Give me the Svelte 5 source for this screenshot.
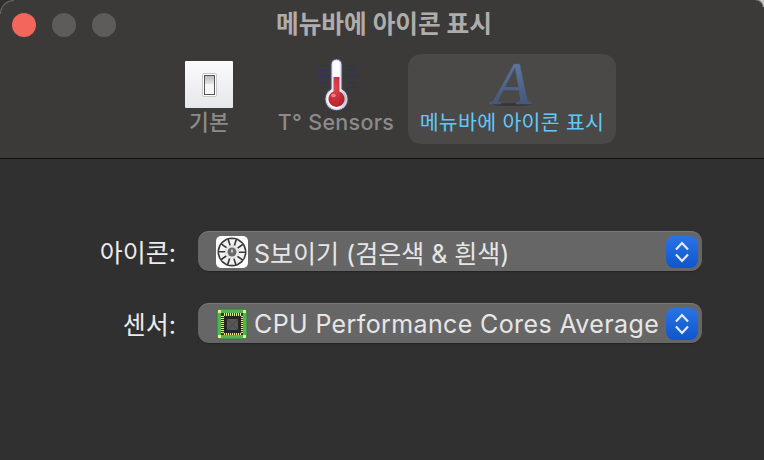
<script>
  const tabs = [
    { id: 'basic', label: '기본' },
    { id: 'sensors', label: 'T° Sensors' },
    { id: 'menubar', label: '메뉴바에 아이콘 표시', active: true }
  ];
  const blades = Array.from({ length: 10 }, (_, i) => i * 36);
  const pins = [0, 1, 2, 3, 4, 5, 6, 7, 8];
  const ticks = [
    { y: 7.5, long: true },
    { y: 12.5, long: false },
    { y: 18.5, long: true },
    { y: 24.5, long: false },
    { y: 29.5, long: true }
  ];
</script>

<div class="window">
  <header class="toolbar">
    <span class="corner"></span>
    <span class="rim"></span>
    <div class="titlebar">
      <div class="lights">
        <span class="light close"></span>
        <span class="light"></span>
        <span class="light"></span>
      </div>
      <div class="title">메뉴바에 아이콘 표시</div>
    </div>
    <nav class="tabs">
      {#each tabs as tab}
        <div class="tab {tab.id}" class:active={tab.active}>
          <div class="tab-icon">
            {#if tab.id === 'basic'}
              <div class="switch-plate">
                <div class="switch"><div class="rocker"></div></div>
              </div>
            {:else if tab.id === 'sensors'}
              <svg width="60" height="54" viewBox="0 0 60 54">
                <defs>
                  <linearGradient id="tube" x1="0" y1="0" x2="1" y2="0">
                    <stop offset="0" stop-color="#f4f4f6" />
                    <stop offset="0.6" stop-color="#ffffff" />
                    <stop offset="1" stop-color="#b4b6c2" />
                  </linearGradient>
                  <radialGradient id="bulb" cx="0.4" cy="0.35" r="0.7">
                    <stop offset="0" stop-color="#e2474f" />
                    <stop offset="1" stop-color="#b5202c" />
                  </radialGradient>
                </defs>
                <g stroke="#2c3462" stroke-width="1.2">
                  {#each ticks as t}
                    <path d="M{t.long ? 10 : 13} {t.y}H21M41 {t.y}H{t.long ? 51 : 48}" />
                  {/each}
                </g>
                <path d="M25 6.500a5.500 5.500 0 0 1 11 0v24.500a11.500 11.500 0 1 1-11 0z" fill="#d6d7e2" stroke="#45486a" stroke-width="1" />
                <path d="M26.500 6.500a4 4 0 0 1 8 0v25.500a9.800 9.800 0 1 1-8 0z" fill="url(#tube)" />
                <path d="M27.500 19h6v14.500a8 8 0 1 1-6 0z" fill="url(#bulb)" />
                <ellipse cx="27.500" cy="37.500" rx="2.500" ry="1.700" fill="#ee7f84" />
              </svg>
            {:else}
              <svg class="letter-icon" width="60" height="52" viewBox="0 0 60 52">
                <defs>
                  <linearGradient id="letter" x1="0" y1="0" x2="0" y2="1">
                    <stop offset="0" stop-color="#6a82aa" />
                    <stop offset="1" stop-color="#3a4c72" />
                  </linearGradient>
                </defs>
                <ellipse cx="30" cy="47.500" rx="20" ry="1.300" fill="#343434" />
                <text class="letter" x="30" y="47" text-anchor="middle" fill="url(#letter)">A</text>
              </svg>
            {/if}
          </div>
          <span class="tab-label">{tab.label}</span>
        </div>
      {/each}
    </nav>
  </header>

  <main class="form">
    <div class="row">
      <label for="icon-select">아이콘:</label>
      <div class="select" id="icon-select">
        <svg class="item-icon" width="32" height="32" viewBox="0 0 32 32">
          <rect width="32" height="32" rx="5" fill="#fff" />
          <circle cx="16" cy="16" r="14.500" fill="#3a3a3a" />
          <g fill="#f2f2f2">
            {#each blades as angle}
              <path d="M15 9.500 L13 3.300 L19.500 3.300 L17.500 9.500z" transform="rotate({angle} 16 16)" />
            {/each}
          </g>
          <circle cx="16" cy="16" r="7" fill="#e8e8e8" />
          <circle cx="16" cy="16" r="4.500" fill="#6a6a6a" />
          <path d="M16 13.500v3" stroke="#fff" stroke-width="1.200" />
        </svg>
        <span class="value">S보이기 (검은색 &amp; 흰색)</span>
        <span class="stepper">
          <svg width="16" height="26" viewBox="0 0 16 26">
            <path d="M2 10.500 8 4l6 6.500M2 15.500 8 22l6-6.500" fill="none" stroke="#e4ecfb" stroke-width="2.200" />
          </svg>
        </span>
      </div>
    </div>
    <div class="row">
      <label for="sensor-select">센서:</label>
      <div class="select" id="sensor-select">
        <svg class="item-icon" width="32" height="32" viewBox="0 0 32 32">
          <rect x="1" y="1" width="30" height="30" rx="2.500" fill="#55b257" stroke="#2f7d3a" />
          <g fill="#f0e68a">
            <rect x="2" y="2" width="3" height="3" />
            <rect x="27" y="2" width="3" height="3" />
            <rect x="2" y="27" width="3" height="3" />
            <rect x="27" y="27" width="3" height="3" />
          </g>
          <rect x="5" y="5" width="22" height="22" fill="#24402a" />
          <g fill="#f0e68a">
            {#each pins as p}
              <rect x={8 + p * 2} y="5" width="1" height="22" />
              <rect x="5" y={8 + p * 2} width="22" height="1" />
            {/each}
          </g>
          <rect x="8" y="8" width="17" height="17" fill="#262626" />
          <rect x="11" y="11" width="11" height="11" fill="#575757" />
          <path d="M11 11 22 22M22 11 11 22" stroke="#454545" stroke-width="1" />
        </svg>
        <span class="value latin">CPU Performance Cores Average</span>
        <span class="stepper">
          <svg width="16" height="26" viewBox="0 0 16 26">
            <path d="M2 10.500 8 4l6 6.500M2 15.500 8 22l6-6.500" fill="none" stroke="#e4ecfb" stroke-width="2.200" />
          </svg>
        </span>
      </div>
    </div>
  </main>
</div>

<style>
  :global(body) {
    background: #2f2e2e;
  }

  .window {
    width: 764px;
    height: 460px;
    display: flex;
    flex-direction: column;
    overflow: hidden;
    background: #303030;
    font-family: Inter, "Noto Sans CJK KR", sans-serif;
  }

  .toolbar {
    position: relative;
    height: 159px;
    box-sizing: border-box;
    background: #3b3a39;
    border-bottom: 1px solid #0f0f0f;
    border-top-left-radius: 14px;
  }

  .corner {
    position: absolute;
    top: 0;
    right: 0;
    width: 8px;
    height: 7px;
    background: radial-gradient(circle at 0 100%, transparent 6px, #c9c9c9 8px);
  }

  .rim {
    position: absolute;
    top: 0;
    left: 0;
    width: 14px;
    height: 14px;
    box-sizing: border-box;
    border-top: 1px solid #6a6968;
    border-left: 1px solid #6a6968;
    border-top-left-radius: 14px;
  }

  .titlebar {
    height: 54px;
    display: flex;
    align-items: center;
    position: relative;
    padding-left: 12px;
    padding-bottom: 4px;
    box-sizing: border-box;
  }

  .lights {
    display: flex;
    gap: 16px;
  }

  .light {
    width: 24px;
    height: 24px;
    border-radius: 50%;
    background: #5d5c5a;
  }

  .light.close {
    background: #f3665c;
  }

  .title {
    position: absolute;
    left: 4px;
    right: 0;
    top: 8px;
    text-align: center;
    font-size: 24.7px;
    line-height: 32px;
    font-weight: 700;
    color: #aeadab;
  }

  .tabs {
    display: flex;
    padding-left: 177px;
  }

  .tab {
    display: flex;
    flex-direction: column;
    align-items: center;
    height: 90px;
    border-radius: 13px;
    box-sizing: border-box;
  }

  .tab.basic {
    width: 64px;
    margin-right: 30px;
  }

  .tab.sensors {
    width: 130px;
    margin-right: 7px;
  }

  .tab.menubar {
    width: 208px;
  }

  .tab.active {
    background: #4a4948;
  }

  .tab-icon {
    display: flex;
    justify-content: center;
  }

  .tab.basic .tab-icon {
    padding-top: 7px;
    height: 47px;
  }

  .tab.sensors .tab-icon {
    margin-top: 4px;
    height: 50px;
  }

  .tab.menubar .tab-icon {
    margin-top: 3px;
    height: 52px;
  }

  .letter-icon {
    overflow: visible;
  }

  .letter {
    font-family: "Liberation Serif", serif;
    font-style: italic;
    font-size: 62px;
    stroke: #4d6288;
    stroke-width: 0.6px;
  }

  .switch-plate {
    width: 48px;
    height: 47px;
    border-radius: 1px;
    background: linear-gradient(#fbfbfd, #e6e7ea);
    display: flex;
    align-items: center;
    justify-content: center;
  }

  .switch {
    width: 15px;
    height: 24px;
    box-sizing: border-box;
    border: 1px solid #c9c9c9;
    border-radius: 2px;
    background: #fff;
    padding: 1px;
  }

  .rocker {
    height: 100%;
    box-sizing: border-box;
    border: 1px solid #555;
    background: linear-gradient(#bcbcbc 0, #e6e6e6 45%, #f6f6f6 46%, #f8f8f8 100%);
  }

  .tab-label {
    font-size: 21.5px;
    line-height: 28px;
    font-weight: 500;
    color: #8c8b8a;
    white-space: nowrap;
    letter-spacing: 0.3px;
  }

  .tab.active .tab-label {
    color: #62c8f8;
    font-size: 20.5px;
    font-weight: 400;
  }

  .form {
    display: flex;
    flex-direction: column;
    gap: 32px;
    padding: 72px 62px 0 0;
  }

  .row {
    display: flex;
    justify-content: flex-end;
    align-items: center;
    gap: 22px;
  }

  label {
    font-size: 25px;
    color: #ececec;
  }

  .select {
    width: 504px;
    height: 40px;
    box-sizing: border-box;
    border-radius: 11px;
    background: #666;
    border-top: 1px solid #787878;
    display: flex;
    align-items: center;
    padding: 0 4px 0 18px;
    box-shadow: 0 1px 1px rgba(0, 0, 0, 0.25);
  }

  .item-icon {
    flex-shrink: 0;
    margin-right: 6px;
  }

  .value {
    flex: 1;
    font-size: 25px;
    color: #e6e6e6;
    white-space: nowrap;
    overflow: hidden;
  }

  .value.latin {
    letter-spacing: 0.38px;
  }

  .stepper {
    width: 32px;
    height: 32px;
    flex-shrink: 0;
    border-radius: 8px;
    background: linear-gradient(#2a73e6, #0f56c9);
    display: flex;
    align-items: center;
    justify-content: center;
  }
</style>
